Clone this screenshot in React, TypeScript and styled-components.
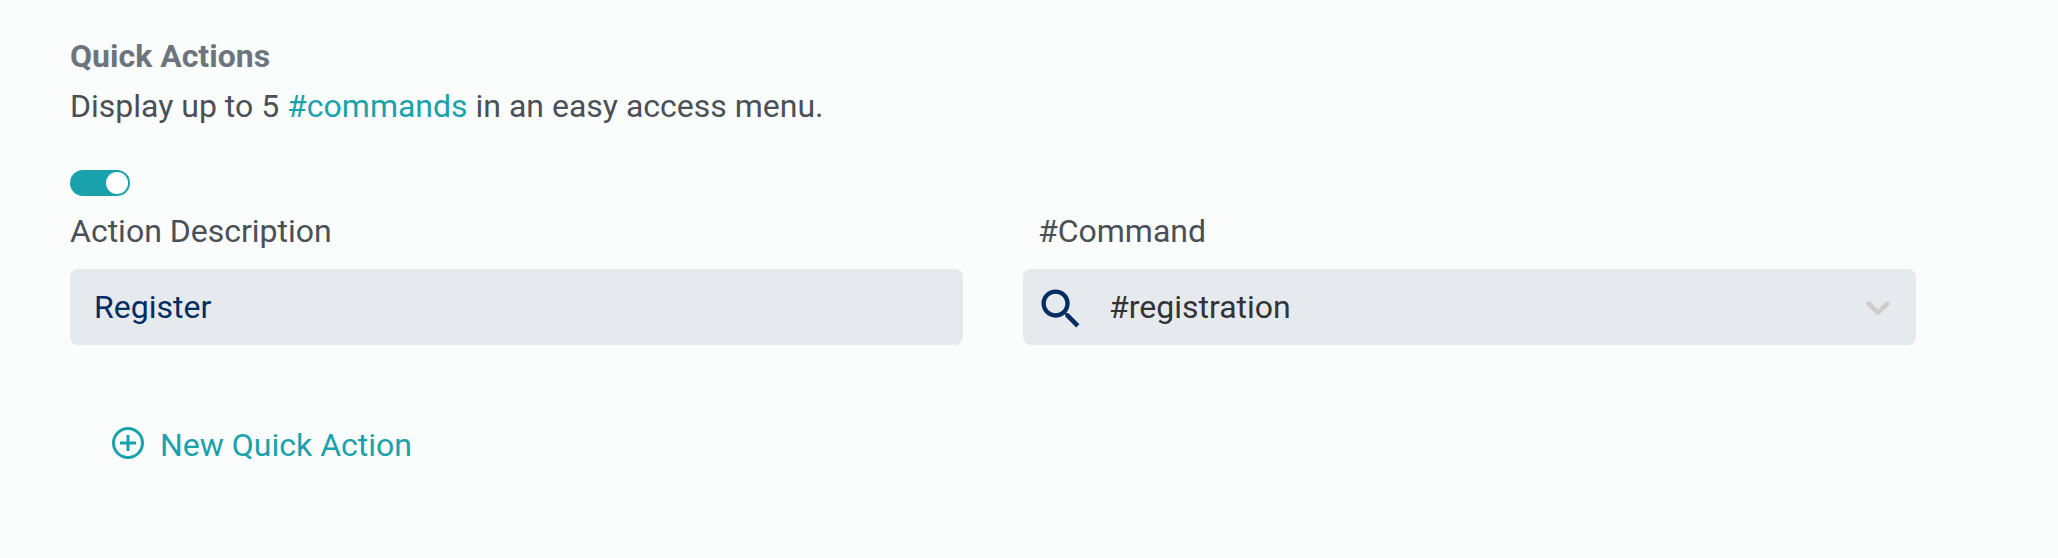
import React from 'react';
import styled, { createGlobalStyle } from 'styled-components';

const Global = createGlobalStyle`
  body { margin: 0; background: #fbfcfc; font-family: Roboto, sans-serif; color: #495057; }
  * { box-sizing: border-box; }
`;
const Page = styled.main`
  height: 558px; padding: 32px 70px 0; font-size: 32px; line-height: 48px;
`;
const Title = styled.h2`
  margin: 0; font-size: 32px; line-height: 48px; font-weight: 700; color: #6c757d;
`;
const Text = styled.p` margin: 2px 0 0; `;
const Link = styled.a` color: #1aa2ac; `;
const Toggle = styled.button`
  display: flex; justify-content: flex-end; align-items: center;
  width: 60px; height: 26px; margin-top: 40px; padding: 2px; border: 0; border-radius: 13px; background: #1aa2ac;
`;
const Knob = styled.span` width: 22px; height: 22px; border-radius: 50%; background: #fff; `;
const Columns = styled.div` display: flex; gap: 60px; margin-top: 11px; `;
const Column = styled.div` width: 893px; `;
const Label = styled.div<{ $indent?: number }>` padding-left: ${p => p.$indent ?? 0}px; height: 62px; `;
const Field = styled.div<{ $color: string; $padding: string }>`
  display: flex; align-items: center; height: 76px; padding: ${p => p.$padding}; border-radius: 8px;
  background: #e6e9ee; color: ${p => p.$color};
`;
const SearchIcon = styled.svg` width: 52px; height: 52px; margin-top: 3px; fill: #002d62; `;
const Chevron = styled.svg` width: 40px; height: 40px; fill: #ccc; `;
const Value = styled.span` flex: 1; margin-left: 22px; `;
const AddButton = styled.button`
  display: flex; align-items: center; gap: 16px; margin: 76px 0 0 42px; padding: 0; border: 0;
  background: none; color: #1aa2ac; font: 400 32px/48px Roboto, sans-serif;
`;
const PlusIcon = styled.svg` width: 32px; height: 32px; margin-top: -4px; fill: none; stroke: currentColor; `;

export default function App() {
  return (
    <Page>
      <Global />
      <Title>Quick Actions</Title>
      <Text>Display up to 5 <Link>#commands</Link> in an easy access menu.</Text>
      <Toggle aria-label="Quick actions"><Knob /></Toggle>
      <Columns>
        <Column>
          <Label>Action Description</Label>
          <Field $color="#002d62" $padding="0 24px">Register</Field>
        </Column>
        <Column>
          <Label $indent={15}>#Command</Label>
          <Field $color="#333" $padding="0 18px 0 12px">
            <SearchIcon viewBox="0 0 24 24"><path d="M15.5 14h-.79l-.28-.27A6.47 6.47 0 0 0 16 9.5 6.5 6.5 0 1 0 9.5 16c1.61 0 3.09-.59 4.23-1.57l.27.28v.79l5 4.99L20.49 19l-4.99-5zm-6 0C7.01 14 5 11.99 5 9.5S7.01 5 9.5 5 14 7.01 14 9.5 11.99 14 9.5 14z" /></SearchIcon>
            <Value>#registration</Value>
            <Chevron viewBox="0 0 20 20"><path d="M4.516 7.548c0.436-0.446 1.043-0.481 1.576 0l3.908 3.747 3.908-3.747c0.533-0.481 1.141-0.446 1.574 0 0.436 0.445 0.408 1.197 0 1.615-0.406 0.418-4.695 4.502-4.695 4.502-0.217 0.223-0.502 0.335-0.787 0.335s-0.57-0.112-0.789-0.335c0 0-4.287-4.084-4.695-4.502s-0.436-1.17 0-1.615z" /></Chevron>
          </Field>
        </Column>
      </Columns>
      <AddButton>
        <PlusIcon viewBox="0 0 32 32">
          <circle cx="16" cy="16" r="14.5" strokeWidth="3" />
          <path d="M16 8v16M8 16h16" strokeWidth="3" />
        </PlusIcon>
        New Quick Action
      </AddButton>
    </Page>
  );
}
